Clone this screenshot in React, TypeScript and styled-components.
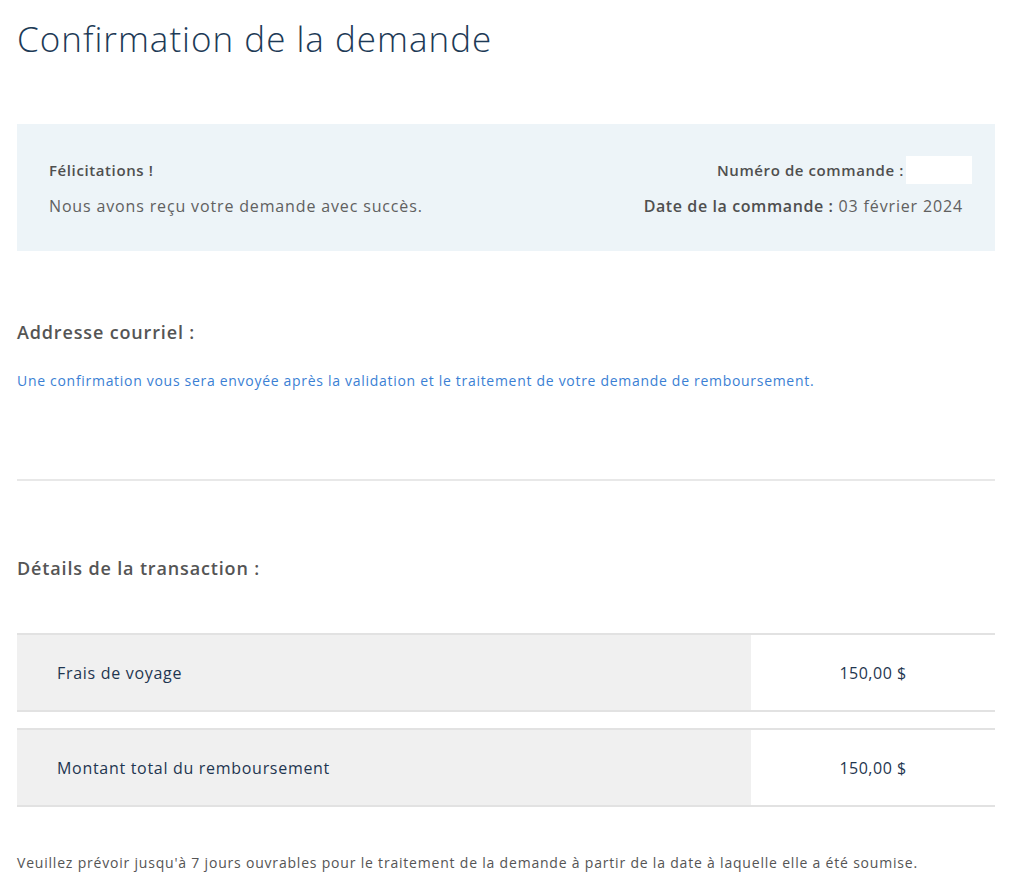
import styled, { createGlobalStyle } from "styled-components";

const GlobalStyle = createGlobalStyle`
  * { box-sizing: border-box; }
  html, body {
    margin: 0;
    padding: 0;
    background: #fff;
    font-family: "Open Sans", "Noto Sans", "Liberation Sans", sans-serif;
  }
`;

interface Row {
  label: string;
  amount: string;
}

const rows: Row[] = [
  { label: "Frais de voyage", amount: "150,00 $" },
  { label: "Montant total du remboursement", amount: "150,00 $" },
];

const App = () => {
  return (
    <>
      <GlobalStyle />
      <Page>
        <Title>Confirmation de la demande</Title>

        <Summary>
          <SummaryCol>
            <Strong>Félicitations !</Strong>
            <Muted>Nous avons reçu votre demande avec succès.</Muted>
          </SummaryCol>
          <SummaryCol $right>
            <Strong>
              Numéro de commande : <Blank />
            </Strong>
            <Muted>
              <b>Date de la commande :</b> 03 février 2024
            </Muted>
          </SummaryCol>
        </Summary>

        <Section>
          <SectionTitle>Addresse courriel :</SectionTitle>
          <Note>
            Une confirmation vous sera envoyée après la validation et le
            traitement de votre demande de remboursement.
          </Note>
        </Section>

        <Divider />

        <Section $details>
          <SectionTitle>Détails de la transaction :</SectionTitle>
          <Table>
            {rows.map((row) => (
              <TableRow key={row.label}>
                <LabelCell>{row.label}</LabelCell>
                <AmountCell>{row.amount}</AmountCell>
              </TableRow>
            ))}
          </Table>
        </Section>

        <Footer>
          Veuillez prévoir jusqu'à 7 jours ouvrables pour le traitement de la
          demande à partir de la date à laquelle elle a été soumise.
        </Footer>
      </Page>
    </>
  );
};

const Page = styled.main`
  width: 978px;
  margin-left: 17px;
  padding-top: 18px;
  padding-bottom: 20px;
`;

const Title = styled.h1`
  margin: 0;
  font-size: 35px;
  font-weight: 300;
  line-height: 42px;
  color: #1d3a56;
  letter-spacing: 1px;
`;

const Summary = styled.div`
  margin-top: 64px;
  height: 127px;
  background: #edf4f8;
  padding: 0 32px;
  display: flex;
  justify-content: space-between;
  align-items: center;
`;

const SummaryCol = styled.div<{ $right?: boolean }>`
  display: flex;
  flex-direction: column;
  gap: 16px;
  align-items: ${(p) => (p.$right ? "flex-end" : "flex-start")};
`;

const Strong = styled.div`
  display: flex;
  align-items: center;
  font-size: 15px;
  font-weight: 600;
  color: #4f4f4f;
  line-height: 20px;
  letter-spacing: 0.6px;
`;

const Blank = styled.span`
  display: inline-block;
  width: 66px;
  height: 28px;
  margin: -4px -9px -4px 2px;
  background: #fff;
`;

const Muted = styled.div`
  font-size: 16px;
  color: #606060;
  line-height: 20px;
  letter-spacing: 0.85px;

  b {
    font-weight: 600;
    color: #4f4f4f;
    letter-spacing: 0.6px;
  }
`;

const Section = styled.section<{ $details?: boolean }>`
  padding-top: ${(p) => (p.$details ? "75px" : "69px")};
`;

const SectionTitle = styled.h2`
  margin: 0;
  font-size: 18px;
  font-weight: 600;
  line-height: 24px;
  color: #555;
  letter-spacing: 0.85px;
`;

const Note = styled.p`
  margin: 28px 0 0;
  font-size: 14px;
  line-height: 18px;
  color: #3b7fd4;
  letter-spacing: 0.7px;
`;

const Divider = styled.hr`
  margin: 89px 0 0;
  border: none;
  height: 2px;
  background: #e8e8e8;
`;

const Table = styled.div`
  margin-top: 53px;
  display: flex;
  flex-direction: column;
  gap: 16px;
`;

const TableRow = styled.div`
  display: grid;
  grid-template-columns: 734px 1fr;
  height: 79px;
  border-top: 2px solid #e2e2e2;
  border-bottom: 2px solid #e2e2e2;
`;

const LabelCell = styled.div`
  background: #f0f0f0;
  display: flex;
  align-items: center;
  padding-left: 40px;
  font-size: 16px;
  color: #1f3650;
  letter-spacing: 0.7px;
`;

const AmountCell = styled.div`
  display: flex;
  align-items: center;
  justify-content: center;
  font-size: 16px;
  color: #1f3650;
  letter-spacing: 0.5px;
`;

const Footer = styled.p`
  margin: 47px 0 0;
  font-size: 14px;
  line-height: 18px;
  color: #555;
  letter-spacing: 0.8px;
`;

export default App;
